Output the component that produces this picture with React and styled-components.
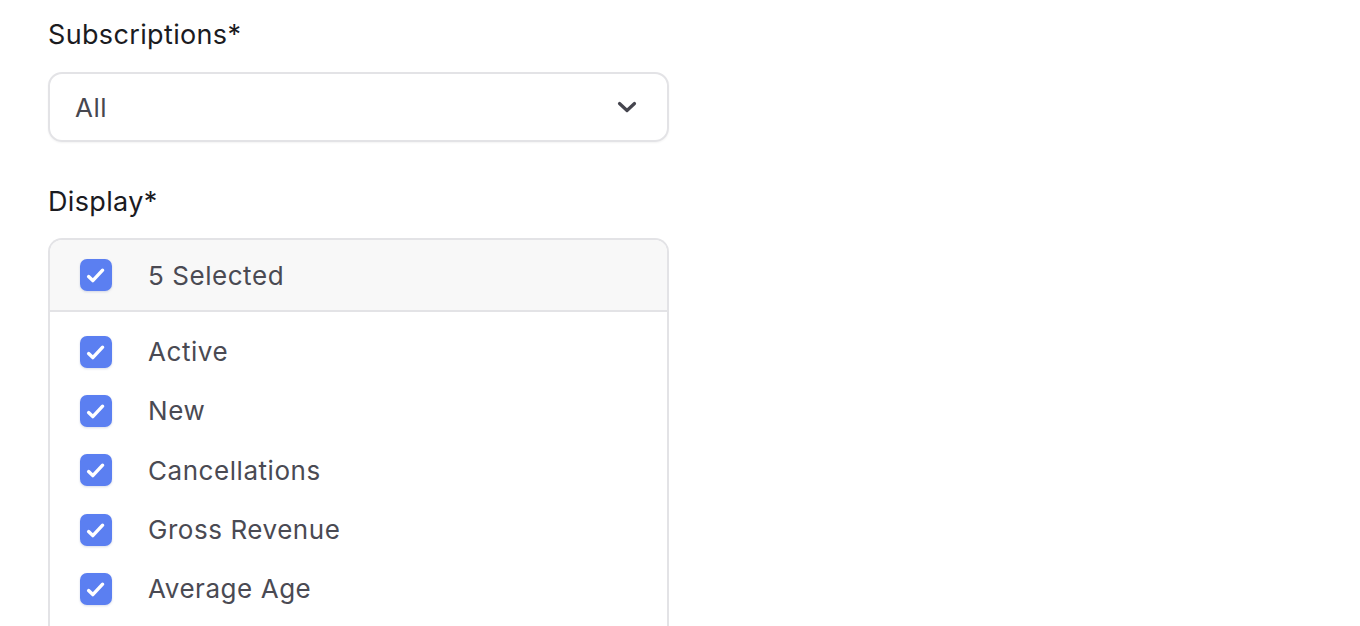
import React from 'react';
import styled, { createGlobalStyle } from 'styled-components';

const GlobalStyle = createGlobalStyle`
  body {
    margin: 0;
    background: #ffffff;
    font-family: 'Inter', 'Liberation Sans', sans-serif;
  }
`;

const Page = styled.div`
  padding: 16px 48px 0 48px;
  width: 621px;
`;

const Field = styled.div`
  margin-bottom: 41px;
`;

const Label = styled.div`
  font-size: 27px;
  line-height: 38px;
  letter-spacing: 0.35px;
  color: #1b1b1f;
  margin-bottom: ${(p) => p.$gap || 18}px;
`;

const Select = styled.div`
  box-sizing: border-box;
  height: 70px;
  border: 2px solid #e3e3e6;
  border-radius: 14px;
  box-shadow: 0 1px 2px rgba(0, 0, 0, 0.05);
  display: flex;
  align-items: center;
  justify-content: space-between;
  padding: 0 30px 0 25px;
  font-size: 26px;
  letter-spacing: 0.55px;
  color: #47474f;
`;

const ListBox = styled.div`
  box-sizing: border-box;
  border: 2px solid #e3e3e6;
  border-bottom: none;
  border-radius: 14px 14px 0 0;
  overflow: hidden;
  height: 400px;
`;

const Header = styled.div`
  height: 70px;
  display: flex;
  align-items: center;
  padding-left: 30px;
  background: #f8f8f8;
  border-bottom: 2px solid #e3e3e6;
`;

const Rows = styled.div`
  padding-top: 10px;
`;

const Row = styled.div`
  height: 59.3px;
  display: flex;
  align-items: center;
  padding-left: 30px;
`;

const Box = styled.svg`
  display: block;
  width: 32px;
  height: 32px;
  flex-shrink: 0;
  filter: drop-shadow(0 1px 1px rgba(40, 60, 140, 0.18));
`;

const OptionText = styled.span`
  margin-left: 36px;
  font-size: 26px;
  letter-spacing: 0.55px;
  color: #4a4a53;
`;

const Check = () => (
  <Box viewBox="0 0 32 32" fill="none">
    <rect x="0" y="0" width="32" height="32" rx="7" fill="#5b7ff1" />
    <path d="M8.6 17.6 L12.8 21.6 L22.6 11.2" stroke="#ffffff" strokeWidth="3.4" strokeLinecap="round" strokeLinejoin="round" />
  </Box>
);

const Chevron = () => (
  <svg width="20" height="12" viewBox="0 0 20 12" fill="none">
    <path d="M2.5 2.5 L10 9.5 L17.5 2.5" stroke="#45454e" strokeWidth="3.2" strokeLinecap="round" strokeLinejoin="round" />
  </svg>
);

const options = ['Active', 'New', 'Cancellations', 'Gross Revenue', 'Average Age'];

export default function App() {
  return (
    <>
      <GlobalStyle />
      <Page>
        <Field>
          <Label>Subscriptions*</Label>
          <Select>
            <span>All</span>
            <Chevron />
          </Select>
        </Field>
        <Label $gap={17}>Display*</Label>
        <ListBox>
          <Header>
            <Check />
            <OptionText>5 Selected</OptionText>
          </Header>
          <Rows>
            {options.map((o) => (
              <Row key={o}>
                <Check />
                <OptionText>{o}</OptionText>
              </Row>
            ))}
          </Rows>
        </ListBox>
      </Page>
    </>
  );
}
